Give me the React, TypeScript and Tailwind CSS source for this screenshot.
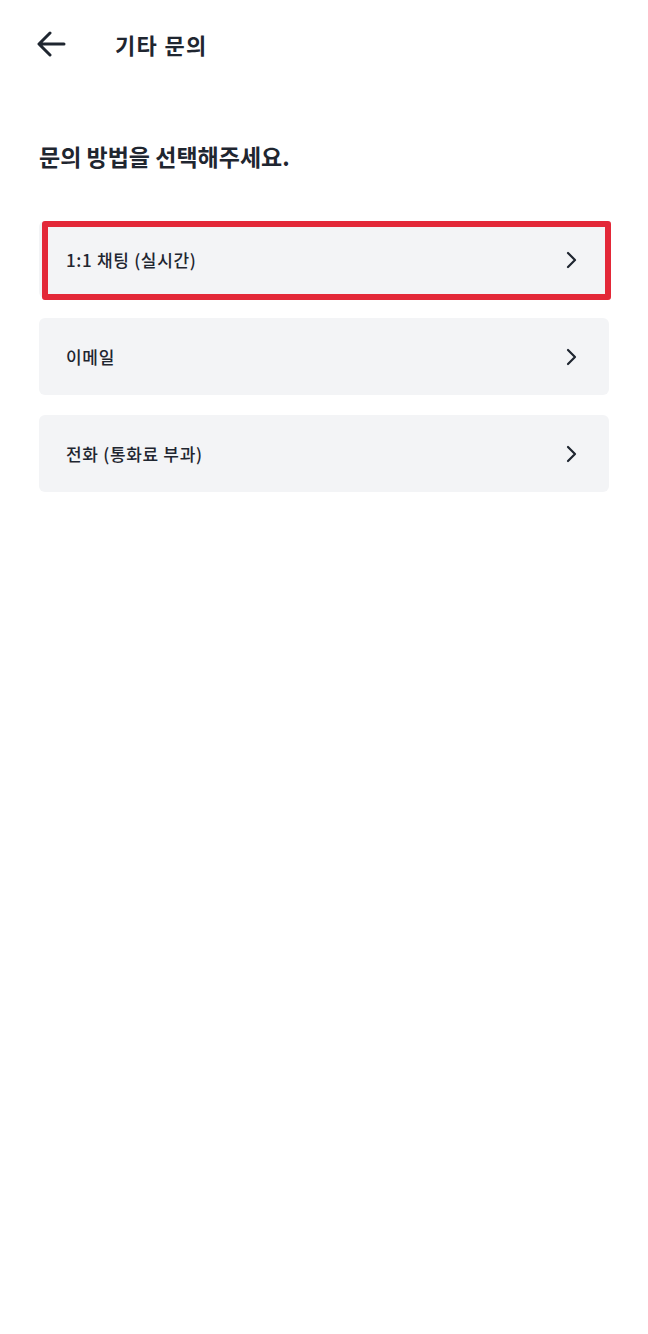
import React from "react";

const Chevron = () => (
  <svg width="24" height="24" viewBox="0 0 24 24" fill="none" stroke="#1f2630" strokeWidth="2.2" strokeLinecap="round" strokeLinejoin="round">
    <path d="M9 5l7 7-7 7" />
  </svg>
);

const items = ["1:1 채팅 (실시간)", "이메일", "전화 (통화료 부과)"];

export default function App() {
  return (
    <div className="min-h-[1334px] w-[648px] bg-white text-[#1f2630]" style={{ fontFamily: '"Noto Sans CJK KR", "Noto Sans", sans-serif' }}>
      <div className="flex h-[88px] items-center px-[37px]">
        <svg width="30" height="26" viewBox="0 0 30 26" fill="none" stroke="#1f2630" strokeWidth="3" strokeLinecap="round" strokeLinejoin="round">
          <path d="M27 13H3M13 2L2 13l11 11" />
        </svg>
        <h1 className="ml-[48px] text-[22px] font-bold leading-none tracking-[0.06em]">기타 문의</h1>
      </div>
      <div className="px-[39px] pt-[57px]">
        <h2 className="text-[23px] font-bold leading-none">문의 방법을 선택해주세요.</h2>
        <div className="mt-[53px] flex flex-col gap-[20px]">
          {items.map((t, i) => (
            <div key={t} className="relative flex h-[77px] items-center justify-between rounded-md bg-[#f3f4f6] pl-[27px] pr-[26px]">
              <span className="text-[17px] font-medium tracking-[0.04em]">{t}</span>
              <Chevron />
              {i === 0 && (
                <div className="pointer-events-none absolute -bottom-[2px] -right-[2px] left-[3px] top-0 rounded-[3px] border-[6px] border-[#e32838]" />
              )}
            </div>
          ))}
        </div>
      </div>
    </div>
  );
}
